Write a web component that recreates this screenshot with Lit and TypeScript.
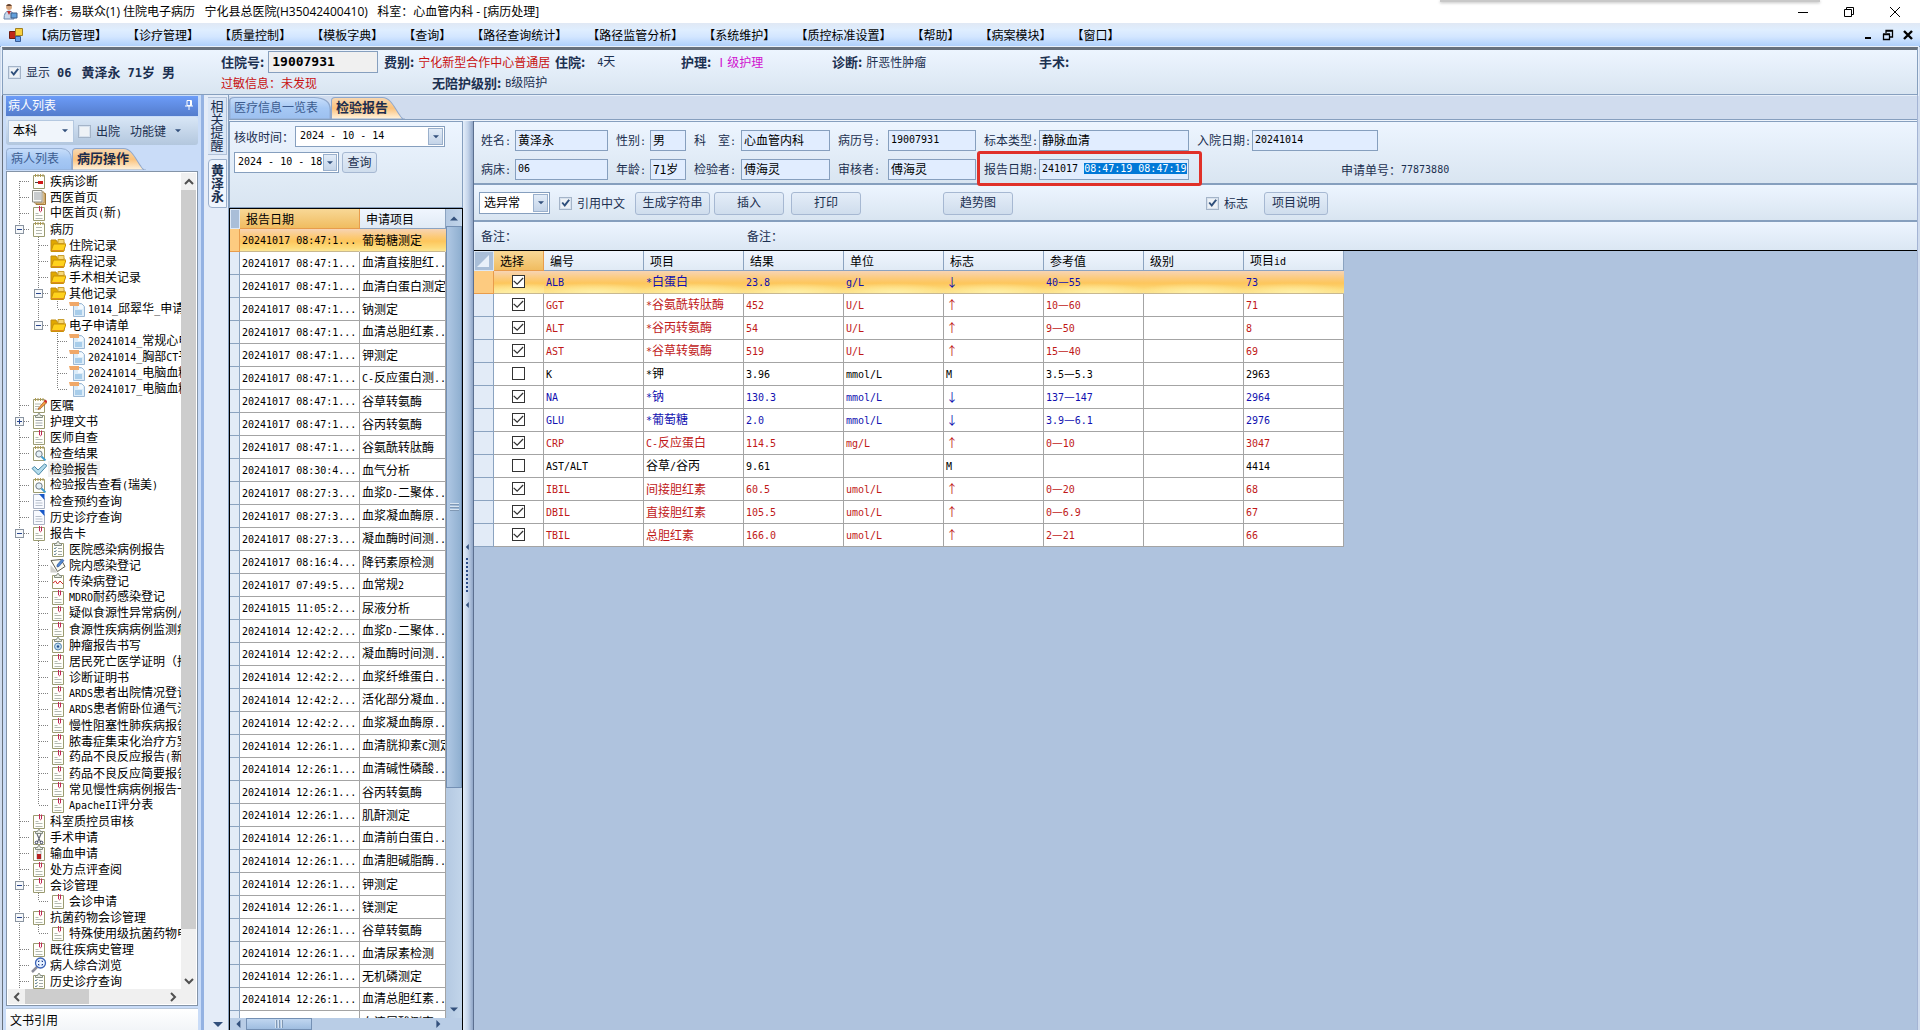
import { LitElement, html, svg, css, nothing, TemplateResult } from "lit";
import { customElement, query } from "lit/decorators.js";
import { classMap } from "lit/directives/class-map.js";

/** Latin runs are set in a half-width face so that two of them fill one CJK cell. */
const tx = (s: string) =>
  s.split(/([\x20-\x7e]+)/).filter(Boolean).map((p) =>
    /^[\x20-\x7e]/.test(p) ? html`<span class="lat">${p}</span>` : p);

interface Node { t: string; i: string; open?: boolean; sel?: boolean; kids?: Node[] }

const clip = (t: string): Node => ({ t, i: "clip" });
const TREE: Node[] = [
  { t: "疾病诊断", i: "red" },
  { t: "西医首页", i: "pages" },
  clip("中医首页(新)"),
  { t: "病历", i: "pad", open: true, kids: [
    { t: "住院记录", i: "folder" },
    { t: "病程记录", i: "folder" },
    { t: "手术相关记录", i: "folder" },
    { t: "其他记录", i: "folder", open: true, kids: [{ t: "1014_邱翠华_申请单", i: "file" }] },
    { t: "电子申请单", i: "folder", open: true, kids: [
      { t: "20241014_常规心电图", i: "file" },
      { t: "20241014_胸部CT平扫", i: "file" },
      { t: "20241014_电脑血糖", i: "file" },
      { t: "20241017_电脑血糖", i: "file" },
    ] },
  ] },
  { t: "医嘱", i: "edit" },
  { t: "护理文书", i: "board", open: false, kids: [] },
  clip("医师自查"),
  { t: "检查结果", i: "look" },
  { t: "检验报告", i: "check", sel: true },
  { t: "检验报告查看(瑞美)", i: "look" },
  { t: "检查预约查询", i: "page" },
  { t: "历史诊疗查询", i: "page" },
  { t: "报告卡", i: "clip", open: true, kids: [
    { t: "医院感染病例报告", i: "list" },
    { t: "院内感染登记", i: "sign" },
    { t: "传染病登记", i: "chart" },
    clip("MDRO耐药感染登记"),
    clip("疑似食源性异常病例/事件"),
    clip("食源性疾病病例监测病例"),
    { t: "肿瘤报告书写", i: "target" },
    clip("居民死亡医学证明（推断）"),
    clip("诊断证明书"),
    clip("ARDS患者出院情况登记"),
    clip("ARDS患者俯卧位通气治疗"),
    clip("慢性阻塞性肺疾病报告卡"),
    clip("脓毒症集束化治疗方案"),
    clip("药品不良反应报告(新)"),
    clip("药品不良反应简要报告"),
    clip("常见慢性病病例报告一览"),
    clip("ApacheII评分表"),
  ] },
  clip("科室质控员审核"),
  { t: "手术申请", i: "scissors" },
  { t: "输血申请", i: "blood" },
  clip("处方点评查阅"),
  { t: "会诊管理", i: "clip", open: true, kids: [clip("会诊申请")] },
  { t: "抗菌药物会诊管理", i: "clip", open: true, kids: [clip("特殊使用级抗菌药物申请")] },
  clip("既往疾病史管理"),
  { t: "病人综合浏览", i: "zoom" },
  { t: "历史诊疗查询", i: "list" },
  clip("病案管理"),
];

const sheet = svg`<path d="M2.500 2.500H13.500V15.500H2.500Z" fill="#fffffa" stroke="#9a9a70"/>`;
const rings = svg`<path d="M4.500 1v3M7 1v3M9.500 1v3M12 1v3" stroke="#b09a50"/>`;
const clamp = svg`<path d="M4.500 2.500h2l1-2h1l1 2h2v2h-7z" fill="#e8ebe4" stroke="#848c80"/>`;
const ICONS: Record<string, unknown> = {
  red: svg`${sheet}${rings}<path d="M4 9.500h3" stroke="#444" /><path d="M7 8h5v3H7z" fill="#d01818"/>`,
  pages: svg`<path d="M5 4.500h9.500v11H5z" fill="#efc88a" stroke="#a07838"/><path d="M3.500 3h9.500v11H3.500z" fill="#f6e6c8" stroke="#b08c50"/><path d="M1.500 1.500h9.500v11.500H1.500z" fill="#f8f8f4" stroke="#8c8c84"/><path d="M3 4h7M3 6h7M3 8h7M3 10h7" stroke="#9aa0a8"/>`,
  clip: svg`${sheet}<path d="M4.500 8.500h3M4.500 10.500h7M4.500 13.500h7" stroke="#b4bab2"/><path d="M8.500 3v3q1 1.500 2 0V1.500M8.500 3V1" fill="none" stroke="#c02858"/>`,
  pad: svg`${sheet}${rings}<path d="M5 6.500h6M5 9.500h6M5 12.500h6" stroke="#b4b8b0"/>`,
  folder: svg`<path d="M1 3h5l1 2h7v9H1z" fill="#e0a800" stroke="#c08c10"/><path d="M8 2.500h6v4H8z" fill="#f6d878" stroke="#caa030"/><path d="M3.500 7H16l-2.500 7.500H1z" fill="#ffd21c" stroke="#c89008"/><path d="M2 13.500h11.500" stroke="#e08a20"/>`,
  file: svg`<path d="M4.500 2.500h8l3 3v10h-11z" fill="#dcecf8" stroke="#9cb8d4"/><path d="M6 9h7v5H6z" fill="#a8cdea"/><path d="M9 4h5v4H9z" fill="#f4faff"/><path d="M0 1h10v4H1z" fill="#f0a868"/>`,
  edit: svg`${sheet}${rings}<path d="M4 7h6M4 9.500h4M4 12h6" stroke="#b4b8b0"/><path d="M8 10.500L14 3.500l2 2-6.500 6-2.500 1z" fill="#f0a040" stroke="#a05020" stroke-width=".7"/><path d="M13 4.500l1.500-2 2 2-1.500 1.500z" fill="#d03030"/>`,
  board: svg`${sheet}${clamp}<path d="M4.500 7.500h7M4.500 10h7M4.500 12.500h7" stroke="#a4aab0"/>`,
  look: svg`${sheet}${rings}<circle cx="8" cy="9" r="3.200" fill="#e4f0f8" stroke="#707c84"/><path d="M10.500 11.500l4 4" stroke="#3c9cd0" stroke-width="1.800"/>`,
  check: svg`<path d="M1 7.500l2.500-2 3.500 3.500L13.500 3l2.500 1.500L7.500 14z" fill="#b4dcec" stroke="#4888a8"/>`,
  page: svg`<path d="M2.500 1.500h7l4 4v10h-11z" fill="#f8faff" stroke="#a8b0c0"/><path d="M8 1h5.500v6z" fill="#1858c8"/><path d="M4.500 7.500h6M4.500 10h7M4.500 12.500h7" stroke="#b8c0cc"/>`,
  list: svg`${sheet}${clamp}<path d="M4 7l1 1 1.500-2M4 10l1 1 1.500-2M4 13l1 1 1.500-2" fill="none" stroke="#4a7088" stroke-width=".8"/><path d="M8 7.500h4M8 10.500h4M8 13.500h4" stroke="#a0a8a8"/>`,
  sign: svg`<path d="M.5 8v7.500h7z" fill="#d0d0cc"/><path d="M1 3.500l10-1 4 7-7.500 5z" fill="#fcfcf4" stroke="#5c5c50"/><path d="M7 8l5-6 2 1.500-5 6-2 .5z" fill="#5088d0" stroke="#2c4c90" stroke-width=".6"/>`,
  chart: svg`${sheet}${clamp}<path d="M3 10l2.500-2 2 3 2.500-3 3 3" fill="none" stroke="#d02828"/>`,
  target: svg`${sheet}${clamp}<circle cx="8" cy="9.500" r="3.500" fill="#bcd8ec" stroke="#5888b0"/><circle cx="8" cy="9.500" r="1.200" fill="#205090"/>`,
  scissors: svg`${sheet}${clamp}<path d="M6 5l3.500 8M10 5l-3.500 8" stroke="#686c78" stroke-width="1.200"/><circle cx="5.500" cy="13.500" r="1.300" fill="none" stroke="#303858"/><circle cx="10.500" cy="13.500" r="1.300" fill="none" stroke="#303858"/>`,
  blood: svg`${sheet}${clamp}<path d="M6 6h4v8H6z" fill="#f4f4f4" stroke="#808080" stroke-width=".6"/><path d="M6 9h4v5H6z" fill="#b82020"/>`,
  zoom: svg`<path d="M1 15l5-5" stroke="#8c8c98" stroke-width="2.500"/><circle cx="9.500" cy="6" r="5" fill="#e8f2ff" stroke="#3c64b8" stroke-width="1.300"/><path d="M7.500 5V4h1M10.500 4h1v1M7.500 7v1h1M10.500 8h1V7" fill="none" stroke="#18388c"/>`,
};

const chevron = (d: string) => html`<svg class="chev" viewBox="0 0 10 10" width="10" height="10" aria-hidden="true"><path d=${d} fill="none" stroke="#505050" stroke-width="2"/></svg>`;
const tri = (d: string, w = 8) => html`<svg class="tri" viewBox="0 0 10 10" width=${w} height=${w} aria-hidden="true"><path d=${d} fill="#33507c"/></svg>`;
const UP = "M0 8L5 3L10 8Z", DOWN = "M0 2L5 7L10 2Z", LEFT = "M8 0L3 5L8 10Z", RIGHT = "M3 0L8 5L3 10Z";

const baseCss = css`
  * { box-sizing: border-box; }
  :host { font: 12px/16px "Noto Sans CJK SC", sans-serif; color: #1c3050; }
  .lat { font-family: "DejaVu Sans Mono", monospace; font-size: 10px; }
  button, input, select { font: inherit; color: inherit; margin: 0; padding: 0; border: 0; background: none; border-radius: 0; }
  svg { display: block; flex: none; }
`;

@customElement("tree-view")
class TreeView extends LitElement {
  static styles = [baseCss, css`
    :host { display: block; color: #000; }
    ul { list-style: none; margin: 0; padding: 0; }
    .row { display: flex; align-items: center; height: 16px; white-space: nowrap; }
    .icon { width: 19px; display: flex; justify-content: center; flex: none; }
    .name { padding: 0 2px; line-height: 16px; }
    .name.sel { background: #f0f0f0; }
  `];

  private guide(up: boolean, down: boolean, across: boolean, box?: boolean) {
    return html`<svg width="19" height="16" viewBox="0 0 19 16" aria-hidden="true">
      <g stroke="#808080" stroke-dasharray="1 1">
        ${up ? svg`<path d="M9.500 0V8"/>` : nothing}
        ${down ? svg`<path d="M9.500 8V16"/>` : nothing}
        ${across ? svg`<path d="M10 8.500H19"/>` : nothing}
      </g>
      ${box === undefined ? nothing : svg`<rect x="5.500" y="4.500" width="8" height="8" fill="#f6f8fa" stroke="#8a94a0"/>
        <path d="M7 8.500h5${box ? "" : "M9.500 6v5"}" stroke="#28458c"/>`}
    </svg>`;
  }

  private rows(nodes: Node[], lines: boolean[]): TemplateResult {
    return html`<ul role=${lines.length ? "group" : "tree"}>${nodes.map((n, k) => {
      const last = k === nodes.length - 1;
      const first = k === 0 && lines.length === 0;
      return html`<li role="treeitem">
        <div class="row">
          ${lines.map((l) => this.guide(l, l, false))}
          ${this.guide(!first, !last, true, n.kids ? !!n.open : undefined)}
          <span class="icon"><svg width="16" height="16" viewBox="0 0 16 16" aria-hidden="true">${ICONS[n.i]}</svg></span>
          <span class=${classMap({ name: true, sel: !!n.sel })}>${tx(n.t)}</span>
        </div>
        ${n.open && n.kids ? this.rows(n.kids, [...lines, !last]) : nothing}
      </li>`;
    })}</ul>`;
  }

  render() { return this.rows(TREE, []); }
}

const A = "20241017 08:47:1...", B = "20241017 08:27:3...", C = "20241014 12:42:2...", D = "20241014 12:26:1...";
const REPORTS: [string, string][] = [
  [A, "葡萄糖测定"], [A, "血清直接胆红..."], [A, "血清白蛋白测定"], [A, "钠测定"], [A, "血清总胆红素..."],
  [A, "钾测定"], [A, "C-反应蛋白测..."], [A, "谷草转氨酶"], [A, "谷丙转氨酶"], [A, "谷氨酰转肽酶"],
  ["20241017 08:30:4...", "血气分析"], [B, "血浆D-二聚体..."], [B, "血浆凝血酶原..."], [B, "凝血酶时间测..."],
  ["20241017 08:16:4...", "降钙素原检测"], ["20241017 07:49:5...", "血常规2"], ["20241015 11:05:2...", "尿液分析"],
  [C, "血浆D-二聚体..."], [C, "凝血酶时间测..."], [C, "血浆纤维蛋白..."], [C, "活化部分凝血..."], [C, "血浆凝血酶原..."],
  [D, "血清胱抑素C测定"], [D, "血清碱性磷酸..."], [D, "谷丙转氨酶"], [D, "肌酐测定"], [D, "血清前白蛋白..."],
  [D, "血清胆碱脂酶..."], [D, "钾测定"], [D, "镁测定"], [D, "谷草转氨酶"], [D, "血清尿素检测"],
  [D, "无机磷测定"], [D, "血清总胆红素..."], [D, "血清尿酸测定"],
];

const HEADS = ["编号", "项目", "结果", "单位", "标志", "参考值", "级别", "项目id"];
const RESULTS: string[][] = [
  ["ALB", "*白蛋白", "23.8", "g/L", "↓", "40—55", "", "73"],
  ["GGT", "*谷氨酰转肽酶", "452", "U/L", "↑", "10—60", "", "71"],
  ["ALT", "*谷丙转氨酶", "54", "U/L", "↑", "9—50", "", "8"],
  ["AST", "*谷草转氨酶", "519", "U/L", "↑", "15—40", "", "69"],
  ["K", "*钾", "3.96", "mmol/L", "M", "3.5—5.3", "", "2963"],
  ["NA", "*钠", "130.3", "mmol/L", "↓", "137—147", "", "2964"],
  ["GLU", "*葡萄糖", "2.0", "mmol/L", "↓", "3.9—6.1", "", "2976"],
  ["CRP", "C-反应蛋白", "114.5", "mg/L", "↑", "0—10", "", "3047"],
  ["AST/ALT", "谷草/谷丙", "9.61", "", "M", "", "", "4414"],
  ["IBIL", "间接胆红素", "60.5", "umol/L", "↑", "0—20", "", "68"],
  ["DBIL", "直接胆红素", "105.5", "umol/L", "↑", "0—6.9", "", "67"],
  ["TBIL", "总胆红素", "166.0", "umol/L", "↑", "2—21", "", "66"],
];

const MENU = ["病历管理", "诊疗管理", "质量控制", "模板字典", "查询", "路径查询统计", "路径监管分析", "系统维护", "质控标准设置", "帮助", "病案模块", "窗口"];

@customElement("app-root")
class AppRoot extends LitElement {
  static styles = [baseCss, css`
    :host { display: flex; flex-direction: column; height: 100vh; overflow: hidden; background: #d0dcee; --line: #869fbe; --panel: linear-gradient(#edf5ff, #d9e5f1); }
    .grow { flex: 1; min-width: 0; }

    .title { display: flex; align-items: center; height: 23px; flex: none; background: #fff; padding: 0 17px 0 2px; gap: 4px; color: #000; position: relative; font-family: "Open Sans", "Noto Sans CJK SC", sans-serif; white-space: pre; }
    .title::before { content: ""; position: absolute; top: 0; left: 75%; width: 380px; height: 2px; background: #c8c8c8; box-shadow: 0 1px 3px #bbb; }
    .winbtn { width: 14px; height: 14px; margin-left: 28px; }
    .menu { display: flex; align-items: center; height: 24px; flex: none; padding: 1px 6px 0 9px; color: #000; background: linear-gradient(#e0e8f4, #dfeeff 30%, #d3e6ff 60%, #afd0fb); border-bottom: 1px solid #7f9fc4; }
    .menu nav { display: flex; gap: 20px; margin-left: 11px; }
    .menu nav button { white-space: nowrap; }
    .mdi { width: 12px; height: 12px; margin-left: 8px; }

    .patient { display: flex; flex: none; height: 48px; margin: 0 2px; border: 1px solid var(--line); border-top: 3px solid #68717c; background: var(--panel); outline: 1px solid #e8f0fa; }
    .who { display: flex; align-items: center; gap: 6px; width: 218px; padding-left: 5px; flex: none; }
    .who b { margin-left: 1px; }
    b { font-size: 13px; white-space: nowrap; }
    b .lat { font-size: 12px; }
    .facts { display: grid; grid-template-columns: 163px 171px 126px 151px 207px 1fr; grid-template-rows: 24px 18px; align-items: center; white-space: nowrap; }
    .facts > * { display: flex; align-items: center; gap: 4px; }
    .facts .wide { gap: 12px; }
    .facts .deep { padding-left: 48px; }
    .facts input { width: 110px; height: 22px; border: 1px solid var(--line); background: #f0f0f0; padding: 0 3px 2px; font: bold 13px "DejaVu Sans Mono", monospace; color: #000; }
    .red { color: #c81010; } .pink { color: #d010d0; }

    .body { display: flex; flex: 1; min-height: 0; padding: 0 2px; }
    .dock { display: flex; flex-direction: column; width: 202px; flex: none; padding: 1px 3px 0 3px; border-left: 1px solid #68717c; border-right: 3px solid #94b2e2; background: #c9dcf8; }
    .dockhead { display: flex; align-items: center; justify-content: space-between; height: 20px; padding: 0 4px 2px 2px; background: linear-gradient(#6c9cf8, #547ccc); color: #fff; flex: none; }
    .tools { display: flex; align-items: center; height: 28px; margin: 1px 0; padding: 0 2px; background: linear-gradient(#d8e6f6, #b3c7de); border-radius: 3px; flex: none; white-space: nowrap; }
    .combo { display: flex; align-items: center; border: 1px solid var(--line); background: #fff; padding: 1px; color: #000; flex: none; }
    .combo select, .combo input { appearance: none; flex: 1; min-width: 0; height: 100%; padding: 0 3px 2px; outline: 0; color: #000; }
    .combo input { font: 10px "DejaVu Sans Mono", monospace; }
    .drop { display: flex; align-items: center; justify-content: center; width: 15px; height: 100%; border: 1px solid #9ab0cc; background: linear-gradient(#e2ecf8, #c4d4e8); flex: none; }
    .combo.flat { width: 66px; height: 23px; background: #f0f5fb; border-color: #b4c8e0; } .combo.flat .drop { border: 0; background: none; }
    .box { appearance: none; width: 13px; height: 13px; border: 1px solid #a4b4c8; background: #eef2f6; display: flex; flex: none; outline: 1px solid #d8e2ee; outline-offset: -2px; }
    .box::before, .tick::before { content: ""; flex: 1; margin: 1px; clip-path: polygon(5% 50%, 22% 38%, 40% 62%, 82% 8%, 100% 20%, 42% 95%); }
    .box:checked::before { background: #30507c; }
    .lab { display: flex; align-items: center; gap: 5px; white-space: nowrap; }
    .tools .lab { margin-left: 4px; } .tools button.lab { margin-left: 10px; gap: 9px; }

    .tabs { display: flex; align-items: flex-end; height: 24px; flex: none; }
    .tab { position: relative; height: 22px; padding: 0 0 2px 5px; white-space: nowrap; text-align: left; color: #3c5c90; }
    .tab svg { position: absolute; inset: 0; width: 100%; height: 100%; }
    .tab span { position: relative; }
    .tab.on { font-weight: bold; color: #1c2c4c; font-size: 13px; }
    .w1 { width: 66px; } .w2 { width: 74px; } .w3 { width: 102px; }

    .treebox { display: grid; grid-template-columns: 1fr 15px; grid-template-rows: 1fr 15px; flex: 1; min-height: 0; background: #fff; border: 1px solid #8494a8; padding: 1px; margin-top: 1px; }
    .treeview { overflow: hidden; padding-left: 2px; min-width: 0; min-height: 0; }
    .sbar { display: flex; background: #f0f0f0; align-items: center; }
    .sbar.v { flex-direction: column; } .sbar .end { display: flex; align-items: center; justify-content: center; width: 17px; height: 17px; flex: none; }
    .thumb { background: #cdcdcd; }
    .v .thumb { width: 100%; flex: 737; } .v .rest { flex: 43; } .h .thumb { height: 100%; flex: 64; } .h .rest { flex: 76; }
    .foot { height: 22px; margin-top: 2px; padding: 3px 4px; background: linear-gradient(#fff, #f2f5f8); color: #000; flex: none; border-top: 1px solid #b8c8dc; }

    .strip { display: flex; flex-direction: column; align-items: flex-end; width: 25px; flex: none; background: #e4ecf8; padding: 2px 1px 0 3px; border-right: 1px solid var(--line); }
    .strip button { writing-mode: vertical-rl; text-orientation: upright; width: 19px; font-size: 13px; line-height: 17px; padding: 2px 0; background: #dae6f6; border: 1px solid #b0c0d8; border-left: 0; }
    .strip button.on { margin-top: 4px; padding: 4px 0; background: #f0f6fe; font-weight: bold; border: 1px solid #9cb0cc; border-radius: 4px 0 0 4px; }
    .strip svg { margin: auto 4px 0 0; }

    .main { display: flex; flex-direction: column; flex: 1; min-width: 0; border-right: 1px solid #a4b4d4; }
    .split { display: flex; flex: 1; min-height: 0; border-top: 1px solid var(--line); padding-top: 1px; box-shadow: inset 0 1px #eef4fc; }
    .left { display: flex; flex-direction: column; width: 234px; flex: none; }
    .query { display: flex; flex-wrap: wrap; align-content: flex-start; align-items: center; gap: 5px 3px; height: 87px; padding: 4px; background: var(--panel); border: 1px solid var(--line); flex: none; white-space: nowrap; }
    .query .q1 { display: flex; align-items: center; gap: 1px; }
    .c1 { width: 150px; height: 21px; } .c2 { width: 105px; height: 21px; }
    .c2 input { padding: 0 0 2px 2px; } .c2 .drop { width: 14px; }
    .btn { border: 1px solid #a6b8d2; border-radius: 3px; background: linear-gradient(#e4edf8, #cfdded); height: 23px; padding-bottom: 2px; white-space: nowrap; flex: none; }
    .btn.sm { width: 35px; height: 21px; } .b64 { width: 64px; } .b70 { width: 70px; } .b75 { width: 75px; }

    .reports { display: grid; grid-template-columns: 1fr 16px; grid-template-rows: 1fr 12px; flex: 1; min-height: 0; border: 1px solid #000; border-bottom: 0; background: #b9cde6; }
    .clipbox { overflow: hidden; min-height: 0; background: #fff; }
    table { border-collapse: separate; border-spacing: 0; table-layout: fixed; color: #000; }
    .rt { width: 216px; } .dt { width: 869px; }
    th, td { height: 23px; padding: 0 0 1px 2px; text-align: left; font-weight: normal; border-right: 1px solid #a4a4a4; border-bottom: 1px solid #a4a4a4; overflow: hidden; white-space: nowrap; background: #fff; }
    thead th { height: 20px; padding: 0 0 0 6px; background: linear-gradient(#f0f6fe, #e0eaf5); border-color: #8ba3c0; }
    tbody th { background: #e2ebf7; border-color: #8ba3c0; }
    thead th.hot { background: linear-gradient(#f8d896, #f0bc60); border-color: #e89c4c; }
    thead th.corner { background: #a9bed8; border: 1px solid #dce8f6; padding: 2px; }
    .s10 { width: 10px; } .s20 { width: 20px; } .c50 { width: 50px; } .c100 { width: 100px; } .c120 { width: 120px; } .c86 { width: 86px; }
    .cur td { background: linear-gradient(#f7d4b4, #fcca78 35%, #fdc65c 55%, #fddb7a 85%, #fbe696); border-right-color: transparent; border-bottom-color: #c8b890; }
    .dt .cur td { background: radial-gradient(60px 10px at 50% 100%, #fff0a8, #fff0a800), linear-gradient(#f7d4b4, #fcca78 35%, #fdc65c 55%, #fddb7a 85%, #fbe08a); }
    .cur th { background: #fdcb80; border-color: #e89c4c; }
    tr.hi td { color: #c01818; } tr.lo td { color: #1010b0; }
    td.mid { padding-left: 18px; }
    .tick { appearance: none; display: flex; width: 13px; height: 13px; border: 1px solid #333; background: #fff; }
    .tick:checked::before { background: #333; clip-path: polygon(2% 48%, 10% 40%, 38% 66%, 88% 14%, 96% 22%, 38% 82%); margin: 0; }
    .blue { background: linear-gradient(90deg, #b4c9e2, #c2d5ea); }
    .blue.h { background: #b9cde6; }
    .blue .end { width: 16px; }
    .blue .thumb { background: linear-gradient(90deg, #b0c8e4, #8fafd0); border: 1px solid #7490b4; display: flex; align-items: center; justify-content: center; flex: 564; }
    .blue .rest { flex: 214; }
    .blue.h .thumb { background: linear-gradient(#c0d6f0, #9fbde0); flex: 64; } .blue.h .rest { flex: 118; }
    .grip { width: 9px; height: 8px; background: repeating-linear-gradient(#d8e4f0 0 1px, #8098b4 1px 2px, transparent 2px 3px); }
    .h .grip { background: repeating-linear-gradient(90deg, #d8e4f0 0 1px, #8098b4 1px 2px, transparent 2px 3px); }

    .bar { display: flex; flex-direction: column; align-items: center; justify-content: center; gap: 8px; width: 10px; flex: none; background: linear-gradient(90deg, #e4eefa, #c4d4ea 50%, #8fa5c6); padding-right: 3px; }
    .dots { width: 2px; height: 36px; background: repeating-linear-gradient(#2c4c88 0 2px, transparent 2px 4px); }

    .right { display: flex; flex-direction: column; flex: 1; min-width: 0; background: #afc3de; border-left: 1px solid #5c7090; }
    .panel { background: var(--panel); border-bottom: 2px solid var(--line); flex: none; }
    .form { display: grid; grid-template-columns: 127px 70px 136px 138px 205px 181px 1fr; gap: 8px; padding: 8px 7px 3px; border-top: 1px solid var(--line); }
    .field { display: flex; align-items: center; position: relative; white-space: pre; }
    .field input { flex: 1; min-width: 0; height: 21px; border: 1px solid var(--line); background: #e1edff; padding: 0 0 3px 2px; color: #000; outline: 0; }
    .field input.num { font: 10px "DejaVu Sans Mono", monospace; }
    .field input::selection { background: #0078d7; color: #fff; }
    .l34 { width: 34px; } .l47 { width: 47px; } .l50 { width: 50px; } .l55 { width: 55px; }
    .order { grid-column: 6 / -1; padding-left: 144px; }
    .mark { position: absolute; inset: -8px -13px -6px -7px; border: 3px solid #e03028; border-radius: 3px; pointer-events: none; }
    .acts { display: flex; align-items: center; height: 37px; padding: 1px 5px 0; }
    .acts .combo { width: 71px; height: 22px; margin-right: 9px; }
    .acts .btn { margin-left: 7px; } .acts .btn.first { margin-left: 10px; } .acts .btn.tight { margin-left: 4px; }
    .acts .btn.far { margin-left: 82px; } .acts .lab.far { margin-left: 193px; } .acts .btn.b64 { margin-left: 16px; }
    .notes { display: flex; align-items: center; height: 28px; padding: 0 7px; background: linear-gradient(#edf5ff, #dbe7f3); flex: none; }
    .notes span { width: 266px; }
    .data { flex: 1; min-height: 0; overflow: hidden; border-top: 1px solid #000; }
  `];

  @query(".picked") private picked!: HTMLInputElement;

  firstUpdated() {
    this.picked.focus({ preventScroll: true });
    this.picked.setSelectionRange(7, this.picked.value.length);
  }

  private tab(label: string, w: string, on = false) {
    const d = on ? "M.5 24V4Q.5.5 4 .5H50C58 .5 62 12 67 20Q69 24 72 24Z" : "M.5 24V4Q.5.5 4 .5H60Q71.500 1 71.500 14V24Z";
    const id = on ? "go" : "gb";
    return html`<button class=${classMap({ tab: true, on, [w]: true })} role="tab" aria-selected=${on}>
      <svg viewBox="0 0 72 24" preserveAspectRatio="none" aria-hidden="true">
        <defs><linearGradient id=${id} x1="0" y1="0" x2="0" y2="1">
          <stop offset="0" stop-color=${on ? "#f6d8b4" : "#c8defa"}/><stop offset=".5" stop-color=${on ? "#fbc27c" : "#a6c8f4"}/><stop offset="1" stop-color=${on ? "#fff4e0" : "#9cc0f0"}/>
        </linearGradient></defs>
        <path d=${d} fill="url(#${id})" stroke="#90a8cc"/>
      </svg><span>${label}</span></button>`;
  }

  private field(label: string, value: string, lw: string, extra: unknown = nothing, cls = "") {
    const id = `f-${label.replace(/\s/g, "")}`;
    const num = /^[\x20-\x7e]+$/.test(value);
    return html`<div class="field"><label class=${lw} for=${id}>${tx(label + ":")}</label>
      <input id=${id} class=${`${num ? "num" : ""} ${cls}`} .value=${value}>${extra}</div>`;
  }

  private head() {
    return html`
      <header class="title">
        <svg width="16" height="18" viewBox="0 0 16 18" aria-hidden="true"><circle cx="7" cy="4" r="3" fill="#d8a880"/><path d="M4 3q3-4 6 0" fill="#604030"/><path d="M2 16q0-8 5-8t5 8z" fill="#c8d8ec" stroke="#6c88b0"/><path d="M5 8l2 4 2-4z" fill="#c03030"/><path d="M9 10h6v5H9z" fill="#60a0dc" stroke="#3c5c88"/></svg>
        <span>操作者：易联众(1) 住院电子病历   宁化县总医院(H35042400410)   科室：心血管内科 - [病历处理]</span>
        <span class="grow"></span>
        <button class="winbtn" aria-label="最小化"><svg width="12" height="12" viewBox="0 0 12 12"><path d="M1 6.500h10" stroke="#000"/></svg></button>
        <button class="winbtn" aria-label="还原"><svg width="12" height="12" viewBox="0 0 12 12"><path d="M1.500 3.500h7v7h-7zM3.500 3.500v-2h7v7h-2" fill="none" stroke="#000"/></svg></button>
        <button class="winbtn" aria-label="关闭"><svg width="12" height="12" viewBox="0 0 12 12"><path d="M1 1l10 10M11 1L1 11" stroke="#000"/></svg></button>
      </header>
      <div class="menu">
        <svg width="15" height="14" viewBox="0 0 15 14" aria-hidden="true"><path d="M.5 3.500h6v7h-6z" fill="#c02818" stroke="#701c10"/><path d="M6.500.5h7v7h-7z" fill="#f8d040" stroke="#a08020"/><path d="M6.500 8.500h5v5h-5z" fill="#68a0e8" stroke="#385c98"/></svg>
        <nav>${MENU.map((m) => html`<button>【${m}】</button>`)}</nav>
        <span class="grow"></span>
        <button class="mdi" aria-label="最小化窗口"><svg width="12" height="12" viewBox="0 0 12 12"><path d="M3 9h6" stroke="#000" stroke-width="2"/></svg></button>
        <button class="mdi" aria-label="还原窗口"><svg width="12" height="12" viewBox="0 0 12 12"><path d="M1.500 5.500h6v5h-6zM1 5h7M4 4V1.500h6.500V8H8M3.500 2h7" fill="none" stroke="#000" stroke-width="1.300"/></svg></button>
        <button class="mdi" aria-label="关闭窗口"><svg width="12" height="12" viewBox="0 0 12 12"><path d="M2 2l8 8M10 2l-8 8" stroke="#000" stroke-width="2.400"/></svg></button>
      </div>`;
  }

  private patient() {
    return html`<section class="patient">
      <div class="who"><label class="lab"><input class="box" type="checkbox" checked>显示</label>
        <b>${tx("06")}</b><b>&nbsp;黄泽永</b><b>${tx("71岁")}</b><b>男</b></div>
      <div class="facts grow">
        <label><b>住院号:</b><input .value=${"19007931"}></label>
        <span><b>费别:</b><span class="red">宁化新型合作中心普通居</span></span>
        <span class="wide"><b>住院:</b><span>${tx("4天")}</span></span>
        <span><b>护理:</b><span class="pink">Ⅰ级护理</span></span>
        <span><b>诊断:</b><span>肝恶性肿瘤</span></span>
        <span><b>手术:</b></span>
        <span class="red">过敏信息：未发现</span>
        <span class="deep"><b>无陪护级别:</b><span>${tx("B级陪护")}</span></span>
      </div></section>`;
  }

  private dock() {
    return html`<aside class="dock">
      <div class="dockhead"><span>病人列表</span>
        <svg width="10" height="12" viewBox="0 0 10 12" aria-hidden="true"><path d="M3 1.500h4.500v5H3zM6.500 1v6M1 7h8M5 7v4" fill="none" stroke="#fff"/></svg></div>
      <div class="tools">
        <div class="combo flat"><select aria-label="科室范围"><option>本科</option></select><span class="drop">${tri(DOWN, 6)}</span></div>
        <label class="lab"><input class="box" type="checkbox">出院</label>
        <button class="lab">功能键${tri(DOWN, 6)}</button>
      </div>
      <div class="tabs" role="tablist">${this.tab("病人列表", "w1")}${this.tab("病历操作", "w2", true)}</div>
      <div class="treebox">
        <div class="treeview"><tree-view></tree-view></div>
        <div class="sbar v"><span class="end">${chevron("M1 7L5 3L9 7")}</span><div class="thumb"></div><div class="rest"></div><span class="end">${chevron("M1 3L5 7L9 3")}</span></div>
        <div class="sbar h"><span class="end">${chevron("M7 1L3 5L7 9")}</span><div class="thumb"></div><div class="rest"></div><span class="end">${chevron("M3 1L7 5L3 9")}</span></div>
        <div class="sbar"></div>
      </div>
      <div class="foot">文书引用</div>
    </aside>
    <div class="strip"><button>相关提醒</button><button class="on">黄泽永</button>${tri(DOWN, 10)}</div>`;
  }

  private reports() {
    return html`<div class="left">
      <form class="query" @submit=${(e: Event) => e.preventDefault()}>
        <div class="q1"><label for="from">核收时间：</label>
          <div class="combo c1"><input id="from" .value=${"2024 - 10 - 14"}><span class="drop">${tri(DOWN, 6)}</span></div></div>
        <div class="combo c2"><input aria-label="截止时间" .value=${"2024 - 10 - 18"}><span class="drop">${tri(DOWN, 6)}</span></div>
        <button class="btn sm">查询</button>
      </form>
      <div class="reports">
        <div class="clipbox"><table class="rt">
          <thead><tr><th class="corner s10"></th><th class="hot c120">报告日期</th><th class="c86">申请项目</th></tr></thead>
          <tbody>${REPORTS.map(([d, n], i) => html`<tr class=${i ? "" : "cur"}><th></th><td>${tx(d)}</td><td>${tx(n)}</td></tr>`)}</tbody>
        </table></div>
        <div class="sbar v blue"><span class="end">${tri(UP)}</span><div class="thumb"><span class="grip"></span></div><div class="rest"></div><span class="end">${tri(DOWN)}</span></div>
        <div class="sbar h blue"><span class="end">${tri(LEFT)}</span><div class="thumb"><span class="grip"></span></div><div class="rest"></div><span class="end">${tri(RIGHT)}</span></div>
      </div>
    </div>
    <div class="bar">${tri(LEFT, 6)}<span class="dots"></span>${tri(LEFT, 6)}</div>`;
  }

  private detail() {
    return html`<div class="right">
      <div class="panel form">
        ${this.field("姓名", "黄泽永", "l34")}${this.field("性别", "男", "l34")}${this.field("科　室", "心血管内科", "l47")}
        ${this.field("病历号", "19007931", "l50")}${this.field("标本类型", "静脉血清", "l55")}${this.field("入院日期", "20241014", "l55")}<span></span>
        ${this.field("病床", "06", "l34")}${this.field("年龄", "71岁", "l34")}${this.field("检验者", "傅海灵", "l47")}
        ${this.field("审核者", "傅海灵", "l50")}${this.field("报告日期", "241017 08:47:19 08:47:19", "l55", html`<span class="mark"></span>`, "picked")}
        <div class="field order">${tx("申请单号：77873880")}</div>
      </div>
      <div class="panel acts">
        <div class="combo"><select aria-label="选择方式"><option>选异常</option></select><span class="drop">${tri(DOWN, 6)}</span></div>
        <label class="lab"><input class="box" type="checkbox" checked>引用中文</label>
        <button class="btn b75 first">生成字符串</button><button class="btn b70 tight">插入</button><button class="btn b70">打印</button>
        <button class="btn b70 far">趋势图</button>
        <label class="lab far"><input class="box" type="checkbox" checked>标志</label>
        <button class="btn b64">项目说明</button>
      </div>
      <div class="notes"><span>备注：</span><span>备注：</span></div>
      <div class="data"><table class="dt">
        <thead><tr><th class="corner s20"><svg width="12" height="12" viewBox="0 0 12 12" aria-hidden="true"><path d="M12 0V12H0Z" fill="#e8f0fa"/></svg></th><th class="hot c50">选择</th>${HEADS.map((h) => html`<th class="c100">${tx(h)}</th>`)}</tr></thead>
        <tbody>${RESULTS.map((r, i) => html`<tr class=${classMap({ cur: i === 0, hi: r[4] === "↑", lo: r[4] === "↓" })}>
          <th></th><td class="mid"><input class="tick" type="checkbox" aria-label=${r[0]} ?checked=${r[4] !== "M"}></td>
          ${r.map((c) => html`<td>${tx(c)}</td>`)}</tr>`)}</tbody>
      </table></div>
    </div>`;
  }

  render() {
    return html`${this.head()}${this.patient()}
      <div class="body">${this.dock()}
        <main class="main">
          <div class="tabs" role="tablist">${this.tab("医疗信息一览表", "w3")}${this.tab("检验报告", "w2", true)}</div>
          <div class="split">${this.reports()}${this.detail()}</div>
        </main>
      </div>`;
  }
}
